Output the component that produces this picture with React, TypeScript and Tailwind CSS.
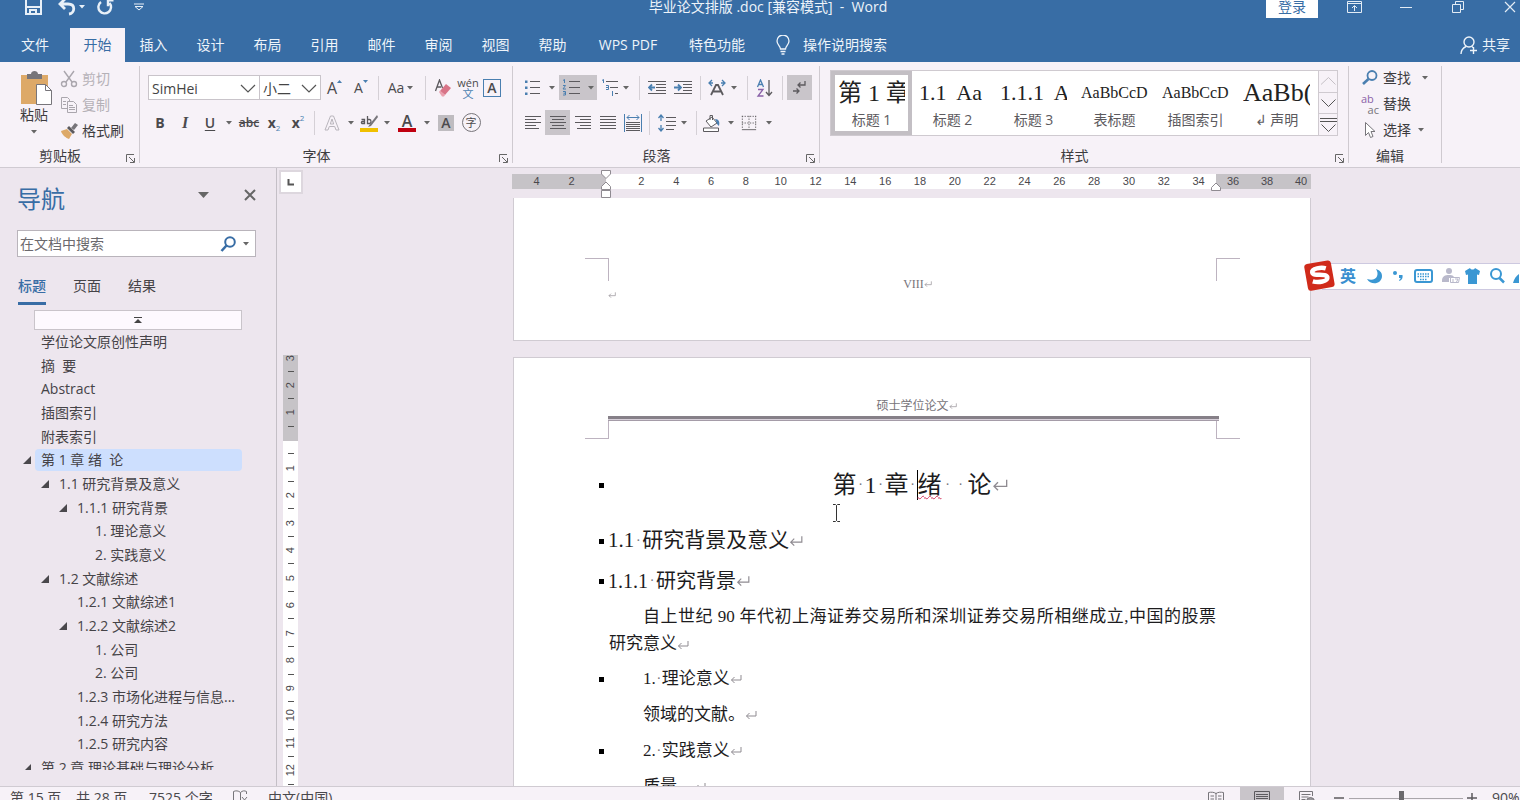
import type { ReactNode } from "react";

const BLUE = "#4a7fb0";
const INK = "#5c5a5e";

// ---------- small shared pieces ----------

function Caret({ className = "w-3" }: { className?: string }) {
  return (
    <span className={`flex shrink-0 justify-center ${className}`}>
      <svg width="6" height="4" viewBox="0 0 6 4">
        <path d="M0 0h6L3 3.5z" fill="#666" />
      </svg>
    </span>
  );
}

function Sep() {
  return <span className="mx-1 h-6 w-px shrink-0 bg-[#d5d0d6]" />;
}

type ToolProps = { label: string; className?: string; children: ReactNode };

function Tool({ label, className = "w-6", children }: ToolProps) {
  return (
    <button
      type="button"
      aria-label={label}
      className={`flex h-[25px] shrink-0 items-center justify-center text-[#4b4a4d] ${className}`}
    >
      {children}
    </button>
  );
}

function Ico({ size = 18, children }: { size?: number; children: ReactNode }) {
  return (
    <svg width={size} height={size} viewBox="0 0 18 18" fill="none" stroke={INK} className="shrink-0">
      {children}
    </svg>
  );
}

function Group({ title, launcher = true, className, children }: { title: string; launcher?: boolean; className: string; children: ReactNode }) {
  return (
    <section className={`flex flex-col py-1 ${className}`}>
      <div className="flex h-full border-r border-[#cfcad0]">
        <div className="flex min-w-0 flex-1 flex-col">
          <div className="min-h-0 flex-1">{children}</div>
          <div className="flex h-3.5 items-center pr-1 text-sm leading-none text-[#3d3c3f]">
            <span className="flex-1 pr-1.5 text-center">{title}</span>
            {launcher && (
              <button type="button" aria-label={`${title}设置`} className="pt-1">
                <svg width="9" height="9" viewBox="0 0 9 9" fill="none" stroke="#666">
                  <path d="M.5 8V.5H8M3 3l5 5M8.5 4v4.5H4" />
                </svg>
              </button>
            )}
          </div>
        </div>
      </div>
    </section>
  );
}

// paragraph mark
function Mark({ size = 12 }: { size?: number }) {
  return (
    <svg width={size} height={size} viewBox="0 0 12 12" fill="none" stroke="#8f8b91" className="inline-block shrink-0">
      <path d="M11 2v5H1.5M4.5 4l-3 3 3 3" />
    </svg>
  );
}

function Lines({ rows }: { rows: number[][] }) {
  return (
    <Ico>
      {rows.map(([x1, x2], i) => (
        <path key={i} d={`M${x1} ${2.5 + i * 3}H${x2}`} />
      ))}
    </Ico>
  );
}

// ---------- title bar and tabs ----------

function TitleBar() {
  return (
    <div className="grid h-3.5 grid-cols-[1fr_auto_1fr] grid-rows-[14px] items-center text-[#eef4fa]">
      <div className="flex items-center pl-6">
        <button type="button" aria-label="保存" className="w-5">
          <svg width="19" height="18" viewBox="0 0 19 18" fill="none" stroke="#e8f0f8" strokeWidth="2">
            <path d="M2 1h15v15H2zM2 9h15M6 16v-4h6v4" />
          </svg>
        </button>
        <button type="button" aria-label="撤消" className="ml-3.5 w-5">
          <svg width="19" height="18" viewBox="0 0 19 18" fill="none" stroke="#e8f0f8" strokeWidth="2.8">
            <path d="M7 1L2 6l5 5M2 6h8c8 0 7 9 1 10" />
          </svg>
        </button>
        <svg width="6" height="4" viewBox="0 0 6 4" className="ml-px">
          <path d="M0 0h6L3 3.5z" fill="#e8f0f8" />
        </svg>
        <button type="button" aria-label="恢复" className="ml-3 w-5">
          <svg width="18" height="18" viewBox="0 0 18 18" fill="none" stroke="#e8f0f8" strokeWidth="2.4">
            <path d="M4 4a6.300 6.300 0 1 0 8.500 1M16.500 2.200H11v6" />
          </svg>
        </button>
        <button type="button" aria-label="自定义快速访问工具栏" className="ml-[17px]">
          <svg width="10" height="8" viewBox="0 0 10 8" fill="none" stroke="#e8f0f8">
            <path d="M0 1h10M1 3.5h8L5 7z" />
          </svg>
        </button>
      </div>
      <h1 className="pl-4 text-sm leading-none whitespace-pre">毕业论文排版 .doc [兼容模式]  -  Word</h1>
      <div className="-mr-4 flex items-center justify-end">
        <button type="button" className="mr-2.5 h-[22px] w-[52px] bg-white text-sm leading-none text-[#386da5]">登录</button>
        <button type="button" aria-label="功能区显示选项" className="flex w-[52px] justify-center">
          <svg width="15" height="12" viewBox="0 0 15 12" fill="none" stroke="#e3ecf5">
            <path d="M.5.5h14v11H.5zM.5 2.5h14M7.5 10V5M5 7l2.500-2.500L10 7" />
          </svg>
        </button>
        <button type="button" aria-label="最小化" className="flex w-[52px] justify-center">
          <svg width="12" height="12" viewBox="0 0 12 12" stroke="#e3ecf5">
            <path d="M0 6.500h12" />
          </svg>
        </button>
        <button type="button" aria-label="还原" className="flex w-[52px] justify-center">
          <svg width="12" height="12" viewBox="0 0 12 12" fill="none" stroke="#e3ecf5">
            <path d="M.5 3.500h8v8h-8zM3.500 3V.5h8v8H9" />
          </svg>
        </button>
        <button type="button" aria-label="关闭" className="flex w-[52px] justify-center">
          <svg width="12" height="12" viewBox="0 0 12 12" stroke="#e3ecf5" strokeWidth="1.2">
            <path d="M1 1l10 10M11 1L1 11" />
          </svg>
        </button>
      </div>
    </div>
  );
}

const tabs = ["插入", "设计", "布局", "引用", "邮件", "审阅", "视图", "帮助"];

function TabRow() {
  return (
    <nav className="mt-3.5 flex h-[34px] items-stretch text-sm leading-none text-[#eef4fa]">
      <button type="button" className="w-[70px]">文件</button>
      <button type="button" className="w-[55px] bg-[#f7f2f8] text-[#386da5]">开始</button>
      {tabs.map((t) => (
        <button type="button" key={t} className="w-[57px]">{t}</button>
      ))}
      <button type="button" className="w-[94px]">WPS PDF</button>
      <button type="button" className="w-[84px]">特色功能</button>
      <button type="button" className="flex items-center gap-3 pl-4">
        <svg width="16" height="20" viewBox="0 0 16 20" fill="none" stroke="#eef4fa" strokeWidth="1.3">
          <path d="M5.500 14c0-3-3.500-4-3.500-8a6 6 0 0 1 12 0c0 4-3.500 5-3.500 8zM5.500 16.500h5M6.500 19h3" />
        </svg>
        操作说明搜索
      </button>
      <button type="button" className="ml-auto flex items-center gap-1 pr-2.5">
        <svg width="18" height="19" viewBox="0 0 18 19" fill="none" stroke="#eef4fa" strokeWidth="1.400">
          <circle cx="9" cy="6" r="5" />
          <path d="M1 18c0-4 2-6 5-7.500M12 10.500l1 1M13.500 11v7M10 14.500h7" />
        </svg>
        共享
      </button>
    </nav>
  );
}

// ---------- ribbon groups ----------

function ClipboardGroup() {
  return (
    <Group title="剪贴板" className="w-[140px]">
      <div className="flex">
        <button type="button" className="flex w-[52px] flex-col items-center pt-1 pl-4 text-sm leading-none text-[#3d3c3f]">
          <svg width="34" height="36" viewBox="0 0 34 36" className="ml-1">
            <path d="M2 5h27v29H2z" fill="#dda968" />
            <path d="M8 4h4c0-4 7-4 7 0h4v5H8z" fill="#77757a" />
            <path d="M17.500 14.500h9l6 6v14h-15z" fill="#fff" stroke="#77757a" />
            <path d="M26.500 14.500v6h6" fill="none" stroke="#77757a" />
          </svg>
          <span className="mt-0.5 whitespace-nowrap">粘贴</span>
          <svg width="6" height="4" viewBox="0 0 6 4" className="mt-2">
            <path d="M0 0h6L3 3.500z" fill="#666" />
          </svg>
        </button>
        <div className="flex flex-col pl-2 text-sm leading-none">
          <button type="button" className="flex h-[26px] items-center gap-1 text-[#b5b1b7]">
            <svg width="18" height="18" viewBox="0 0 18 18" fill="none" stroke="#aaa6ad" strokeWidth="1.400">
              <path d="M4 1l8 11M14 1L6 12" />
              <circle cx="4" cy="14" r="2.500" />
              <circle cx="14" cy="14" r="2.500" />
            </svg>
            剪切
          </button>
          <button type="button" className="flex h-[26px] items-center gap-1 text-[#b5b1b7]">
            <svg width="18" height="18" viewBox="0 0 18 18" fill="#f7f2f8" stroke="#aaa6ad">
              <path d="M1.500 1.500h6l2 2v9h-8zM3 5.500h3M3 8.500h3" />
              <path d="M7.500 5.500h6l3 3v8h-9zM9 9.500h4M9 11.500h6M9 13.500h6" />
            </svg>
            复制
          </button>
          <button type="button" className="flex h-[26px] items-center gap-1 text-[#3d3c3f]">
            <svg width="18" height="18" viewBox="0 0 18 18">
              <path d="M1 9l6-2 5 5-3 5c-3-1-7-4-8-8z" fill="#dda968" />
              <path d="M7 6l2-2 6 6-2 2z" fill="#5c5a5e" />
              <path d="M11 6l4-5 3 2-4 5z" fill="#77757a" />
            </svg>
            格式刷
          </button>
        </div>
      </div>
    </Group>
  );
}

function Combo({ label, value, className }: { label: string; value: string; className: string }) {
  return (
    <div className={`relative h-[25px] border border-[#c9c4ca] bg-white ${className}`}>
      <select aria-label={label} defaultValue={value} className="h-full w-full appearance-none bg-transparent pb-[3px] pl-[3px] text-sm leading-none text-[#444]">
        <option>{value}</option>
      </select>
      <svg width="16" height="9" viewBox="0 0 16 9" fill="none" stroke="#555" strokeWidth="1.200" className="pointer-events-none absolute top-2 right-[3px]">
        <path d="M1 1l7 7 7-7" />
      </svg>
    </div>
  );
}

function FontGroup() {
  return (
    <Group title="字体" className="w-[373px]">
      <div className="flex flex-col gap-2.5 pt-[9px] pl-2">
        <div className="flex items-center">
          <Combo label="字体" value="SimHei" className="w-[112px]" />
          <Combo label="字号" value="小二" className="-ml-px w-[62px]" />
          <Tool label="增大字号" className="w-[27px]">
            <span className="text-base">A</span>
            <svg width="5" height="3" viewBox="0 0 5 3" className="mb-3"><path d="M0 3h5L2.500 0z" fill={BLUE} /></svg>
          </Tool>
          <Tool label="减小字号" className="w-[26px]">
            <span className="text-sm">A</span>
            <svg width="5" height="3" viewBox="0 0 5 3" className="mb-3"><path d="M0 0h5L2.500 3z" fill={BLUE} /></svg>
          </Tool>
          <Sep />
          <Tool label="更改大小写" className="w-[38px]">
            <span className="text-sm">Aa</span>
            <Caret />
          </Tool>
          <Sep />
          <Tool label="清除格式" className="w-[26px]">
            <Ico>
              <path d="M1.500 12L5.500 1l3 8M3 8h4" strokeWidth="1.300" />
              <path d="M6 12l6-7 5 4-6 7z" fill="#d87488" stroke="none" />
              <path d="M5 13l1-1.500 5 4.500-1 1.500H8z" fill="#eaa0ae" stroke="none" />
            </Ico>
          </Tool>
          <Tool label="拼音指南" className="w-6 flex-col">
            <span className="text-[11px] leading-[11px]">wén</span>
            <span className="text-[11px] leading-[11px] text-[#4a7fb0]">文</span>
          </Tool>
          <Tool label="字符边框">
            <span className="flex size-[18px] items-center justify-center border border-[#4a7fb0] text-sm leading-none font-semibold">A</span>
          </Tool>
        </div>
        <div className="flex items-center">
          <Tool label="加粗"><b className="text-sm">B</b></Tool>
          <Tool label="倾斜" className="w-[26px]"><i className="font-['Liberation_Serif',serif] text-base font-semibold">I</i></Tool>
          <Tool label="下划线"><span className="text-sm font-semibold underline underline-offset-2">U</span></Tool>
          <Caret className="w-3.5" />
          <Tool label="删除线" className="w-[26px]"><s className="text-xs font-semibold">abc</s></Tool>
          <Tool label="下标"><b className="text-sm">x</b><span className="mt-2.5 text-[8px] text-[#4a7fb0]">2</span></Tool>
          <Tool label="上标"><b className="text-sm">x</b><span className="mb-2.5 text-[8px] text-[#4a7fb0]">2</span></Tool>
          <Sep />
          <Tool label="文本效果" className="w-[26px]">
            <svg width="16" height="16" viewBox="0 0 16 16" fill="none" stroke="#b9b5bc">
              <path d="M1 15L6.500 1h3L15 15h-3l-1.300-3.500H5.300L4 15zM6.300 9h3.400L8 4z" />
            </svg>
          </Tool>
          <Caret />
          <Tool label="突出显示">
            <span className="flex flex-col items-center">
              <svg width="18" height="14" viewBox="0 0 18 14" fill="none" stroke="#5c5a5e" strokeWidth="1.300">
                <path d="M1.500 5.500h3v4H2.500c-1.500 0-1.500-2 0-2h2M7.500 2v7.500h2c2 0 2-4 0-4h-2" />
                <path d="M17 1l-7 9-2 3 3-1 7-9z" fill="#77757a" stroke="none" />
              </svg>
              <span className="h-1 w-[18px] bg-[#f0c000]" />
            </span>
          </Tool>
          <Caret />
          <Tool label="字体颜色" className="w-7">
            <span className="flex flex-col items-center">
              <span className="text-base leading-[14px] font-semibold">A</span>
              <span className="h-1 w-[18px] bg-[#c00010]" />
            </span>
          </Tool>
          <Caret />
          <Tool label="字符底纹" className="w-[26px]">
            <span className="flex size-4 items-center justify-center bg-[#bfbcc0] text-sm leading-none font-semibold">A</span>
          </Tool>
          <Tool label="带圈字符">
            <span className="flex size-[19px] items-center justify-center rounded-full border border-[#77757a] text-[11px] leading-none">字</span>
          </Tool>
        </div>
      </div>
    </Group>
  );
}

function ParagraphGroup() {
  return (
    <Group title="段落" className="w-[307px]">
      <div className="flex flex-col gap-2.5 pt-[9px] pl-2">
        <div className="flex items-center">
          <Tool label="项目符号">
            <Ico>
              <path d="M6 2.500h10M6 8.500h10M6 14.500h10" />
              <path d="M1 1.500h2.500V4H1zM1 7.500h2.500V10H1zM1 13.500h2.500V16H1z" fill={BLUE} stroke="none" />
            </Ico>
          </Tool>
          <Caret className="w-3.5" />
          <Tool label="编号" className="w-[38px] gap-2 bg-[#c9c5ca]">
            <Ico>
              <path d="M7 2.500h11M7 8.500h11M7 14.500h11" />
              <path d="M1 1.500l1.500-1V4M1 6.500h2.500L1 10h3M1 12.500h2.500V16H1M1.500 14.200h2" stroke={BLUE} />
            </Ico>
            <Caret className="w-1.5" />
          </Tool>
          <Tool label="多级列表" className="w-[38px] gap-0.5">
            <Ico>
              <path d="M5 2.500h12M9 8.500h8M14 14.500h3" />
              <path d="M1 1.500L2.500.500V4M5 6.500h2.500v4H5M5 8.500h2M11.500 12v5" stroke={BLUE} />
            </Ico>
            <Caret className="w-2.5" />
          </Tool>
          <Sep />
          <Tool label="减少缩进量" className="w-[26px]">
            <Ico>
              <path d="M0 2.500h18M8 5.500h10M8 8.500h10M8 11.500h10M0 14.500h18" />
              <path d="M7 8.500H1.500M4 5.500l-3 3 3 3" stroke={BLUE} strokeWidth="1.800" />
            </Ico>
          </Tool>
          <Tool label="增加缩进量" className="w-[26px]">
            <Ico>
              <path d="M0 2.500h18M9 5.500h9M9 8.500h9M9 11.500h9M0 14.500h18" />
              <path d="M0 8.500h6.500M4 5.500l3 3-3 3" stroke={BLUE} strokeWidth="1.800" />
            </Ico>
          </Tool>
          <Sep />
          <Tool label="中文版式" className="w-[38px] gap-0.5">
            <Ico>
              <path d="M3 16L8 6h2l5 10M5.500 12.500h7" strokeWidth="1.800" />
              <path d="M4 1L1 4l3 3M1 4h4M14 1l3 3-3 3M17 4h-4" stroke={BLUE} strokeWidth="1.300" />
            </Ico>
            <Caret />
          </Tool>
          <Sep />
          <Tool label="排序" className="w-[26px]">
            <Ico>
              <path d="M1.500 8L4.500 1l3 7M2.500 5.500h4" stroke={BLUE} strokeWidth="1.300" />
              <path d="M2 10.500h5L2 17h5.500" stroke="#8a62a8" strokeWidth="1.300" />
              <path d="M13 1v15M10 13l3 3.500 3-3.500" strokeWidth="1.300" />
            </Ico>
          </Tool>
          <Sep />
          <Tool label="显示编辑标记" className="w-[25px] bg-[#c9c5ca]">
            <Ico>
              <path d="M14 2v4H7M9.500 3.500L7 6l2.500 2.500M2 12h6M5.500 9.500L8 12l-2.500 2.500" strokeWidth="1.300" />
            </Ico>
          </Tool>
        </div>
        <div className="flex items-center">
          <Tool label="左对齐"><Lines rows={[[1, 17], [1, 12], [1, 17], [1, 12], [1, 15]]} /></Tool>
          <Tool label="居中" className="w-[25px] bg-[#c9c5ca]"><Lines rows={[[1, 17], [3, 15], [1, 17], [3, 15], [1, 17]]} /></Tool>
          <Tool label="右对齐" className="w-[25px]"><Lines rows={[[1, 17], [6, 17], [1, 17], [6, 17], [3, 17]]} /></Tool>
          <Tool label="两端对齐" className="w-[25px]"><Lines rows={[[1, 17], [1, 17], [1, 17], [1, 17], [1, 17]]} /></Tool>
          <Tool label="分散对齐" className="w-[25px]">
            <Ico>
              <path d="M.5 0v18M17.500 0v18M3 3.500h12M5.500 1L3 3.500 5.500 6M12.500 1L15 3.500 12.500 6" stroke={BLUE} />
              <path d="M2 8.500h14M2 10.500h14M2 12.500h14M2 14.500h14M2 16.500h14" />
            </Ico>
          </Tool>
          <Sep />
          <Tool label="行距" className="w-[38px] gap-1">
            <Ico>
              <path d="M8 3.500h10M8 7.500h10M8 11.500h10M8 15.500h8" />
              <path d="M3 7V1.500M.5 4L3 1l2.500 3M3 11v5.500M.5 14L3 17l2.500-3" stroke={BLUE} strokeWidth="1.300" />
            </Ico>
            <Caret className="w-2" />
          </Tool>
          <Sep />
          <Tool label="底纹" className="w-[38px] gap-1">
            <Ico>
              <path d="M3 7l6-4 5 6-6 4zM7 6V1.500h2.500V6M.5 14h15v3.500H.5z" fill="#fff" />
              <path d="M12 5c4 0 5 3 4 7-2-1-2-3-3-5z" fill={BLUE} stroke="none" />
            </Ico>
            <Caret />
          </Tool>
          <Tool label="边框" className="w-[38px] gap-1.5">
            <Ico size={16}>
              <path d="M1.500 1v15M9 1v15M16.500 1v15M1 1.500h16M1 9h16" strokeDasharray="1.500 1.500" />
              <path d="M1 16.500h16" />
            </Ico>
            <Caret />
          </Tool>
        </div>
      </div>
    </Group>
  );
}

const styles = [
  { name: "标题 1", preview: "第 1 章", size: "text-[24px]" },
  { name: "标题 2", preview: "1.1  Aa", size: "text-[22px]" },
  { name: "标题 3", preview: "1.1.1  A", size: "text-[22px]" },
  { name: "表标题", preview: "AaBbCcDc", size: "text-base" },
  { name: "插图索引", preview: "AaBbCcDc", size: "text-base" },
  { name: "↲ 声明", preview: "AaBb(", size: "text-[26px]" },
];

function StylesGroup() {
  return (
    <Group title="样式" className="min-w-0 flex-[529_1_0%]">
      <div className="mt-1 mr-2.5 ml-2.5 flex h-[66px] border border-[#cfcad0] bg-white">
        <div className="flex min-w-0 flex-1 overflow-hidden">
          {styles.map((s, i) => (
            <button
              type="button"
              key={s.name}
              className={`flex w-[81px] shrink-0 flex-col items-stretch border-4 px-[3px] ${i === 0 ? "border-[#c3bfc4]" : "border-transparent"}`}
            >
              <span className={`flex h-9 items-center overflow-hidden text-left font-['Liberation_Serif','Noto_Sans_CJK_SC',serif] leading-9 whitespace-pre text-[#222] ${s.size}`}>{s.preview}</span>
              <span className="pt-px text-sm leading-4 text-[#5c5a5e]">{s.name}</span>
            </button>
          ))}
        </div>
        <div className="flex w-[19px] shrink-0 flex-col divide-y divide-[#cfcad0] border-l border-[#cfcad0] bg-[#f7f2f8]">
          <button type="button" aria-label="上一行" className="flex flex-1 items-center justify-center">
            <svg width="15" height="8" viewBox="0 0 15 8" fill="none" stroke="#c5c0c6"><path d="M0 7.500L7.500.500l7 7" /></svg>
          </button>
          <button type="button" aria-label="下一行" className="flex flex-1 items-center justify-center">
            <svg width="15" height="8" viewBox="0 0 15 8" fill="none" stroke="#555"><path d="M.5.500l7 7 7-7" /></svg>
          </button>
          <button type="button" aria-label="其他" className="flex flex-1 items-center justify-center">
            <svg width="17" height="14" viewBox="0 0 17 14" fill="none" stroke="#555"><path d="M0 .5h17M0 3.500h17M1.500 6.500l7 7 7-7" /></svg>
          </button>
        </div>
      </div>
    </Group>
  );
}

function EditGroup() {
  return (
    <Group title="编辑" launcher={false} className="w-[93px]">
      <div className="flex flex-col pl-3 text-sm leading-none text-[#3d3c3f]">
        <button type="button" className="flex h-6 items-center gap-1">
          <svg width="18" height="16" viewBox="0 0 18 16" fill="none" stroke={BLUE} strokeWidth="1.800">
            <circle cx="11" cy="5.500" r="4.500" />
            <path d="M7.500 9L2 14" strokeWidth="2.600" />
          </svg>
          查找
          <Caret className="w-5" />
        </button>
        <button type="button" className="flex h-7 items-center gap-1">
          <span className="flex w-[18px] flex-col text-[11px] leading-[11px] text-[#77757a]">
            <span className="text-left text-[#8a62a8]">ab</span>
            <span className="text-right">ac</span>
          </span>
          替换
        </button>
        <button type="button" className="flex h-6 items-center gap-1">
          <svg width="18" height="18" viewBox="0 0 18 18" fill="#fff" stroke="#77757a">
            <path d="M4.500 1.500v13l3-3 2 5 2.500-1-2-5h4z" />
          </svg>
          选择
          <Caret />
        </button>
      </div>
    </Group>
  );
}

// ---------- navigation pane ----------

type NavItem = { text: string; level: number; open?: boolean; selected?: boolean };

const outline: NavItem[] = [
  { text: "学位论文原创性声明", level: 0 },
  { text: "摘  要", level: 0 },
  { text: "Abstract", level: 0 },
  { text: "插图索引", level: 0 },
  { text: "附表索引", level: 0 },
  { text: "第 1 章 绪  论", level: 0, open: true, selected: true },
  { text: "1.1 研究背景及意义", level: 1, open: true },
  { text: "1.1.1 研究背景", level: 2, open: true },
  { text: "1. 理论意义", level: 3 },
  { text: "2. 实践意义", level: 3 },
  { text: "1.2 文献综述", level: 1, open: true },
  { text: "1.2.1 文献综述1", level: 2 },
  { text: "1.2.2 文献综述2", level: 2, open: true },
  { text: "1. 公司", level: 3 },
  { text: "2. 公司", level: 3 },
  { text: "1.2.3 市场化进程与信息...", level: 2 },
  { text: "1.2.4 研究方法", level: 2 },
  { text: "1.2.5 研究内容", level: 2 },
  { text: "第 2 章 理论基础与理论分析", level: 0, open: true },
];

const indent = ["pl-[23px]", "pl-[41px]", "pl-[59px]", "pl-[77px]"];

function NavPane() {
  return (
    <aside className="flex w-[277px] shrink-0 flex-col border-r border-[#c4bfc6] text-sm leading-none text-[#454347]">
      <div className="flex h-[62px] items-center pr-5 pl-[17px]">
        <h2 className="flex-1 text-2xl leading-none text-[#386da5]">导航</h2>
        <button type="button" aria-label="任务窗格选项" className="mr-[35px] pb-2">
          <svg width="11" height="6" viewBox="0 0 11 6"><path d="M0 0h11L5.500 6z" fill="#666" /></svg>
        </button>
        <button type="button" aria-label="关闭" className="pb-2">
          <svg width="12" height="12" viewBox="0 0 12 12" stroke="#666" strokeWidth="2"><path d="M1 1l10 10M11 1L1 11" /></svg>
        </button>
      </div>
      <div className="ml-[17px] flex h-[27px] w-[239px] shrink-0 items-center border border-[#b9b4bb] bg-white">
        <input aria-label="在文档中搜索" placeholder="在文档中搜索" className="min-w-0 flex-1 pl-[2px] text-sm leading-none placeholder:text-[#6b696d]" />
        <svg width="17" height="16" viewBox="0 0 17 16" fill="none" stroke="#386da5" strokeWidth="2">
          <circle cx="10" cy="6" r="4.800" />
          <path d="M6.500 9.500L1.500 15" strokeWidth="2.600" />
        </svg>
        <Caret className="w-[18px]" />
      </div>
      <div className="flex h-[48px] shrink-0 items-end gap-[27px] pl-[18px]">
        <button type="button" className="border-b-[3px] border-[#386da5] pb-[9px] font-medium text-[#386da5]">标题</button>
        <button type="button" className="pb-3">页面</button>
        <button type="button" className="pb-3">结果</button>
      </div>
      <button type="button" aria-label="跳转到文档开头" className="mt-[5px] mr-[34px] ml-[34px] flex h-5 shrink-0 items-center justify-center border border-[#c9c4ca] bg-[#fdf9fe]">
        <svg width="8" height="7" viewBox="0 0 8 7"><path d="M0 0h8v1H0zM0 6h8L4 2z" fill="#444" /></svg>
      </button>
      <div className="mb-4 min-h-0 flex-1 overflow-hidden">
        <ul className="grid h-[450px] auto-rows-fr pr-[34px]">
          {outline.map((item, i) => (
            <li key={i} className={`flex items-center ${indent[item.level]}`}>
              <span className="w-3 shrink-0">
                {item.open && <svg width="8" height="8" viewBox="0 0 8 8"><path d="M8 0v8H0z" fill="#4a484c" /></svg>}
              </span>
              <button type="button" className={`h-[22px] flex-1 pl-1.5 text-left whitespace-pre ${item.selected ? "rounded-sm bg-[#cddffe]" : ""}`}>{item.text}</button>
            </li>
          ))}
        </ul>
      </div>
    </aside>
  );
}

// ---------- rulers ----------

function VLabel({ n }: { n?: number }) {
  return (
    <span className="flex items-center justify-center">
      {n ? <span className="rotate-180 [writing-mode:vertical-rl]">{n}</span> : <i className="h-px w-1.5 bg-[#555]" />}
    </span>
  );
}

function VerticalRuler() {
  return (
    <div className="flex w-[26px] shrink-0 flex-col items-center overflow-hidden pl-px font-['Liberation_Sans',sans-serif] text-[11px] leading-none text-[#4a484c]">
      <button type="button" aria-label="制表符" className="mt-0.5 flex size-6 shrink-0 items-center justify-center border-2 border-[#ddd7de] bg-white">
        <svg width="8" height="8" viewBox="0 0 8 8" fill="none" stroke="#555" strokeWidth="2"><path d="M1.500 1v5.500H7" /></svg>
      </button>
      <div className="mt-[161px] h-[86px] w-[15px] shrink-0 bg-[#c6c3c7]">
        <div className="-mt-1 grid h-[82px] auto-rows-fr">
          {[3, 0, 2, 0, 1, 0].map((n, i) => <VLabel key={i} n={n} />)}
        </div>
      </div>
      <div className="w-[15px] shrink-0 bg-white pt-1.5">
        <div className="grid h-[344px] auto-rows-fr">
          {Array.from({ length: 25 }, (_, i) => <VLabel key={i} n={i % 2 ? (i + 1) / 2 : 0} />)}
        </div>
      </div>
    </div>
  );
}

function HorizontalRuler() {
  return (
    <div className="relative mt-1.5 flex h-[15px] shrink-0 text-center font-['Liberation_Sans',sans-serif] text-[11px] leading-[15px] text-[#4a484c]">
      <div className="flex w-[94px] bg-[#c6c3c7] pl-[7px]">
        <span className="w-[35px]">4</span>
        <span className="w-[35px]">2</span>
      </div>
      <div className="grid flex-1 grid-cols-17 bg-white pl-[18px]">
        {Array.from({ length: 17 }, (_, i) => <span key={i}>{(i + 1) * 2}</span>)}
      </div>
      <div className="flex w-[95px] bg-[#c6c3c7]">
        {[36, 38, 40].map((n) => <span key={n} className="w-[34px] shrink-0">{n}</span>)}
      </div>
      {/* indent handles */}
      <svg width="12" height="29" viewBox="0 0 12 29" fill="#fff" stroke="#8f8b91" className="absolute -top-1 left-[88px]">
        <path d="M1.500.500h9v3.500L6 8.500 1.500 4zM1.500 19.500v-3L6 12l4.500 4.500v3zM1.500 20.500h9v7h-9z" />
      </svg>
      <svg width="12" height="10" viewBox="0 0 12 10" fill="#fff" stroke="#8f8b91" className="absolute top-2 right-[89px]">
        <path d="M1.500 8.500v-3L6 1l4.500 4.500v3z" />
      </svg>
    </div>
  );
}

// ---------- document ----------

function Dot({ className = "w-2" }: { className?: string }) {
  return <span className={`flex justify-center text-sm text-[#77747a] ${className}`}>·</span>;
}

function Line({ bullet = false, className = "", children }: { bullet?: boolean; className?: string; children: ReactNode }) {
  return (
    <div className={`flex h-9 shrink-0 items-center ${className}`}>
      <span className="w-[9px] shrink-0">{bullet && <i className="block size-[5px] bg-black" />}</span>
      {children}
    </div>
  );
}

function Pages() {
  return (
    <div className="ml-px flex min-h-0 flex-1 flex-col gap-4 overflow-hidden pt-[9px] font-['Liberation_Serif','Noto_Sans_CJK_SC',serif] text-[#1d1c1e]">
      <article className="flex h-[143px] shrink-0 flex-col border border-t-0 border-[#d0cbd2] bg-white pt-[60px]">
        <div className="flex justify-between pr-[70px] pl-[71px]">
          <i className="h-[23px] w-6 border-t border-r border-[#bdb3c0]" />
          <span className="flex items-center pt-5 pl-2.5 text-xs leading-none text-[#77747a]">VIII<Mark size={8} /></span>
          <i className="h-[23px] w-6 border-t border-l border-[#bdb3c0]" />
        </div>
        <span className="-mt-1 pl-[94px] leading-none"><Mark size={8} /></span>
      </article>

      <article className="flex min-h-0 flex-1 flex-col overflow-hidden border border-b-0 border-[#d0cbd2] bg-white">
        <header className="mx-[94px] mr-[91px] flex h-[61px] shrink-0 items-end justify-center border-b-[3px] border-[#868088] pb-0.5 pl-1.5 text-xs text-[#77747a]">
          <span className="flex items-center">硕士学位论文<Mark size={8} /></span>
        </header>
        <div className="mr-[91px] ml-[94px] h-0.5 shrink-0 border-b border-[#a59ca8] bg-[#d8d0da]" />
        <div className="flex shrink-0 justify-between pr-[70px] pl-[71px]">
          <i className="h-[18px] w-6 border-r border-b border-[#bdb3c0]" />
          <i className="h-[18px] w-6 border-b border-l border-[#bdb3c0]" />
        </div>

        <div className="flex flex-col pt-7 pr-[94px] pl-[85px] text-[17px]">
          <Line bullet className="text-2xl">
            <h3 className="flex flex-1 items-center justify-center pl-4">
              第<Dot />1<Dot />章<Dot />
              <span className="h-[30px] w-px bg-black" />
              <span className="underline decoration-[#d0365f] decoration-wavy decoration-1 underline-offset-2">绪</span>
              <Dot className="w-3" /><Dot className="w-3.5" />论<Mark size={16} />
            </h3>
          </Line>
          <Line bullet className="mt-5 text-[21px]"><h4 className="flex items-center">1.1<Dot />研究背景及意义<Mark size={14} /></h4></Line>
          <Line bullet className="mt-1 text-xl"><h5 className="flex items-center">1.1.1<Dot />研究背景<Mark size={14} /></h5></Line>
          <p className="mt-1 pl-2.5 leading-[27px]">
            <span className="block pl-[34px] [text-align-last:justify]">自上世纪 90 年代初上海证券交易所和深圳证券交易所相继成立,中国的股票</span>
            <span className="block">研究意义<Mark /></span>
          </p>
          <Line bullet className="mt-1"><span className="flex items-center pl-[35px]">1.<Dot className="w-1.5" />理论意义<Mark /></span></Line>
          <Line><span className="flex items-center pl-[35px]">领域的文献。<Mark /></span></Line>
          <Line bullet><span className="flex items-center pl-[35px]">2.<Dot className="w-1.5" />实践意义<Mark /></span></Line>
          <Line><span className="flex items-center pl-[35px]">质量。<Mark /></span></Line>
        </div>
      </article>
    </div>
  );
}

// floating input-method toolbar
function ImeBar() {
  return (
    <div className="absolute top-[92px] right-0 flex h-[31px] w-[216px] items-center">
      <div className="absolute top-[3px] right-0 h-[27px] w-[198px] border-y border-[#cdc9e0] bg-white" />
      <div className="relative flex w-full items-center">
        <svg width="32" height="32" viewBox="0 0 32 32" className="shrink-0">
          <g transform="rotate(-10 16 16)">
            <rect x="2" y="2" width="27" height="27" rx="3" fill="#d02a1a" />
            <path d="M23 9.500c-4-2-14-2.500-14 1.500 0 5 14 2.500 14 7.500 0 4.500-10 4-15 1.500" fill="none" stroke="#fff" strokeWidth="4.500" />
          </g>
        </svg>
        <button type="button" className="w-6 pl-1 text-base leading-none font-bold text-[#3a8fd0]">英</button>
        <svg width="160" height="20" viewBox="0 0 160 20" fill="#3a97d3" className="ml-2 shrink-0">
          <path d="M12 3c4 6 0 13-9 10 4 7 15 5 15-3 0-4-3-6-6-7z" />
          <circle cx="31" cy="7" r="2" />
          <path d="M35 9h3.500c.5 3-.5 5-3 6l-.5-1c1-.5 1.500-1 1.500-2H35z" />
          <rect x="51" y="4" width="17" height="12" rx="2" fill="none" stroke="#3a97d3" strokeWidth="2" />
          <path d="M53.500 8h12M53.500 10.500h12M56 13.500h7" stroke="#3a97d3" strokeWidth="1.500" strokeDasharray="1.500 1" />
          <g fill="#b9b9cb">
            <circle cx="85" cy="5" r="3" />
            <path d="M78 15c0-5 3-6 7-6s5 1 5 3h-5v4h-7z" />
            <path d="M86.500 11.500h9l-1 5h-8z" fill="#fff" stroke="#b9b9cb" />
            <path d="M89 13v3M91 13h3l-1.500 3" fill="none" stroke="#b9b9cb" />
          </g>
          <path d="M101 5l5-3c1 2 4 2 5 0l5 3-1 4-2-.5V18h-9V8.500l-2 .5z" />
          <circle cx="132" cy="8" r="5" fill="none" stroke="#3a97d3" strokeWidth="2" />
          <path d="M135.500 12l4.500 4.500" stroke="#3a97d3" strokeWidth="2.500" />
          <path d="M149 17c1-4 3-7 6-9v9z" />
        </svg>
      </div>
    </div>
  );
}

function StatusBar() {
  return (
    <footer className="h-3.5 shrink-0 overflow-hidden border-t border-[#d0cbd2] bg-[#f7f2f8]">
      <div className="flex h-[22px] items-center pl-2.5 text-sm leading-none whitespace-nowrap text-[#4a484c]">
        <span className="w-[66px]">第 15 页</span>
        <span className="w-[73px]">共 28 页</span>
        <span className="w-[83px]">7525 个字</span>
        <button type="button" aria-label="校对" className="w-9">
          <svg width="18" height="16" viewBox="0 0 18 16" fill="none" stroke="#77757a">
            <path d="M8.500 2.500c-2-2-5-2-7-1v12c2-1 5-1 7 1zM8.500 2.500c2-2 4-2 6-1V4M10 7l5 6M15 7l-5 6" />
          </svg>
        </button>
        <span className="flex-1">中文(中国)</span>
        <button type="button" aria-label="阅读视图" className="flex w-12 justify-center">
          <svg width="16" height="15" viewBox="0 0 16 15" fill="none" stroke="#77757a">
            <path d="M8 2.500C6 1 3 1 .5 1.500v12C3 13 6 13 8 14.500 10 13 13 13 15.500 13.500v-12C13 1 10 1 8 2.500zM8 2v12M2.500 5H6M2.500 8H6M10 5h3.500M10 8h3.500" />
          </svg>
        </button>
        <button type="button" aria-label="页面视图" className="flex h-full w-[44px] items-center justify-center bg-[#c9c5ca]">
          <svg width="16" height="15" viewBox="0 0 16 15" fill="none" stroke="#5c5a5e">
            <path d="M.5.500h15v14H.5zM2 3.500h12M2 5.500h12M2 7.500h12M2 9.500h12" />
          </svg>
        </button>
        <button type="button" aria-label="Web 版式视图" className="flex w-[45px] justify-center">
          <svg width="16" height="15" viewBox="0 0 16 15" fill="none" stroke="#77757a">
            <path d="M13.500 5V.5H.5v14H7M2.500 3.500h9M2.500 6h7M2.500 8.500h4" />
            <circle cx="11.500" cy="10.500" r="4" fill="#9a979c" />
          </svg>
        </button>
        <button type="button" aria-label="缩小" className="flex w-5 justify-center">
          <svg width="10" height="10" viewBox="0 0 10 10" stroke="#5c5a5e" strokeWidth="1.500"><path d="M0 5h10" /></svg>
        </button>
        <input
          type="range"
          aria-label="缩放比例"
          min={10}
          max={190}
          defaultValue={92}
          className="h-3.5 w-[114px] appearance-none bg-[linear-gradient(#aaa6ab,#aaa6ab)] bg-[length:100%_1px] bg-center bg-no-repeat [&::-webkit-slider-thumb]:h-3.5 [&::-webkit-slider-thumb]:w-[5px] [&::-webkit-slider-thumb]:appearance-none [&::-webkit-slider-thumb]:bg-[#6b696d]"
        />
        <button type="button" aria-label="放大" className="flex w-[18px] justify-center">
          <svg width="10" height="10" viewBox="0 0 10 10" stroke="#5c5a5e" strokeWidth="1.500"><path d="M0 5h10M5 0v10" /></svg>
        </button>
        <span className="ml-[11px] w-7 overflow-hidden">90%</span>
      </div>
    </footer>
  );
}

export default function App() {
  return (
    <div className="flex h-screen flex-col overflow-hidden bg-[#ede6ee] font-['Open_Sans','Noto_Sans_CJK_SC',sans-serif]">
      <header className="shrink-0 bg-[#386da5]">
        <TitleBar />
        <TabRow />
      </header>
      <div className="flex h-[106px] shrink-0 border-b border-[#d0cbd2] bg-[#f7f2f8]">
        <ClipboardGroup />
        <FontGroup />
        <ParagraphGroup />
        <StylesGroup />
        <EditGroup />
        <div className="w-[78px] shrink-0" />
      </div>
      <div className="relative flex min-h-0 flex-1">
        <NavPane />
        <VerticalRuler />
        <main className="flex min-w-0 flex-1 justify-center">
          <div className="relative flex w-[799px] flex-col">
            <HorizontalRuler />
            <Pages />
            {/* mouse pointer */}
            <svg width="9" height="18" viewBox="0 0 9 18" fill="none" stroke="#333" className="absolute top-[336px] left-[320px]">
              <path d="M1 .500h2.500l1 1 1-1H8M4.500 1.500v15M1 17.500h2.500l1-1 1 1H8" />
            </svg>
          </div>
        </main>
        <ImeBar />
      </div>
      <StatusBar />
    </div>
  );
}
